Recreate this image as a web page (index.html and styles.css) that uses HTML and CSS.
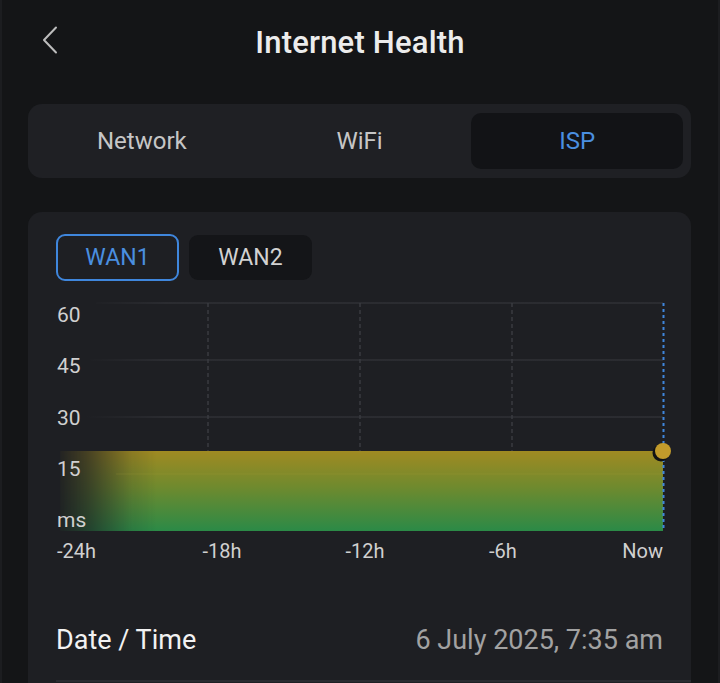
FILE: index.html
```html
<!DOCTYPE html>
<html lang="en">
<head>
  <meta charset="UTF-8" />
  <meta name="viewport" content="width=device-width, initial-scale=1.0"/>
  <title>Internet Health</title>
  <link rel="stylesheet" href="styles.css">
</head>
<body>
  <div class="page">
    <div class="header">
      <button class="back">
        <svg width="16" height="28" viewBox="0 0 16 28">
          <path d="M14 1.5 L2 14 L14 26.5" fill="none" stroke="#bdbdbd" stroke-width="2" stroke-linecap="round" stroke-linejoin="round"/>
        </svg>
      </button>
      <h1 class="title">Internet Health</h1>
      <span></span>
    </div>

    <div class="tabs">
      <div class="tab">Network</div>
      <div class="tab">WiFi</div>
      <div class="tab active">ISP</div>
    </div>

    <div class="card">
      <div class="wans">
        <button class="wan selected">WAN1</button>
        <button class="wan">WAN2</button>
      </div>

      <svg class="chart" width="635" height="280" viewBox="0 0 635 280">
        <defs>
          <linearGradient id="gridFade" gradientUnits="userSpaceOnUse" x1="30" x2="110" y1="0" y2="0">
            <stop offset="0" stop-color="#2f3035" stop-opacity="0"/>
            <stop offset="1" stop-color="#2f3035" stop-opacity="1"/>
          </linearGradient>
          <linearGradient id="fill" x1="0" x2="0" y1="0" y2="1">
            <stop offset="0" stop-color="#a08a22"/>
            <stop offset="0.45" stop-color="#6f8a2e"/>
            <stop offset="1" stop-color="#2b8a47"/>
          </linearGradient>
          <linearGradient id="fadeIn" gradientUnits="userSpaceOnUse" x1="0" x2="100" y1="0" y2="0">
            <stop offset="0" stop-color="#fff" stop-opacity="0"/>
            <stop offset="0.3" stop-color="#fff" stop-opacity="0.3"/>
            <stop offset="0.75" stop-color="#fff" stop-opacity="0.85"/>
            <stop offset="1" stop-color="#fff" stop-opacity="1"/>
          </linearGradient>
          <mask id="fillMask">
            <rect x="0" y="150" width="610" height="90" fill="url(#fadeIn)"/>
          </mask>
        </defs>

        <line x1="40" y1="8" x2="607" y2="8" stroke="url(#gridFade)" stroke-width="1.5"/>
        <line x1="34" y1="65" x2="607" y2="65" stroke="url(#gridFade)" stroke-width="1.5"/>
        <line x1="30" y1="122" x2="607" y2="122" stroke="url(#gridFade)" stroke-width="1.5"/>

        <line x1="152" y1="8" x2="152" y2="156" stroke="#3a3b40" stroke-width="1.5" stroke-dasharray="4 3"/>
        <line x1="304" y1="8" x2="304" y2="156" stroke="#3a3b40" stroke-width="1.5" stroke-dasharray="4 3"/>
        <line x1="456" y1="8" x2="456" y2="156" stroke="#3a3b40" stroke-width="1.5" stroke-dasharray="4 3"/>

        <rect x="4" y="156" width="603" height="80" fill="url(#fill)" mask="url(#fillMask)"/>
        <line x1="60" y1="179" x2="607" y2="179" stroke="#b0a040" stroke-opacity="0.2" stroke-width="1"/>

        <line x1="607.5" y1="8" x2="607.5" y2="236" stroke="#3f86dc" stroke-width="2" stroke-dasharray="3 3"/>
        <circle cx="605" cy="158" r="8.5" fill="#111214"/>
        <circle cx="607" cy="156" r="8" fill="#c29b2b"/>

        <g class="ylabels">
          <text x="1" y="27">60</text>
          <text x="1" y="78">45</text>
          <text x="1" y="130">30</text>
          <text x="1" y="181">15</text>
          <text x="1" y="232">ms</text>
        </g>
        <g class="xlabels">
          <text x="1" y="263">-24h</text>
          <text x="166" y="263" text-anchor="middle">-18h</text>
          <text x="309" y="263" text-anchor="middle">-12h</text>
          <text x="447" y="263" text-anchor="middle">-6h</text>
          <text x="607" y="263" text-anchor="end">Now</text>
        </g>
      </svg>

      <div class="row">
        <span class="label">Date / Time</span>
        <span class="value">6 July 2025, 7:35 am</span>
      </div>
      <div class="divider"></div>
    </div>
  </div>
</body>
</html>
```

FILE: styles.css
```css
* {
  margin: 0;
  padding: 0;
  box-sizing: border-box;
  font-family: Roboto, 'Liberation Sans', sans-serif;
}

body {
  background: #141517;
  color: #fff;
  width: 720px;
  height: 683px;
  overflow: hidden;
}

.page {
  height: 683px;
  overflow: hidden;
  border-left: 2px solid #1c1d20;
  border-right: 2px solid #1c1d20;
}

.header {
  height: 84px;
  display: grid;
  grid-template-columns: 1fr auto 1fr;
  align-items: center;
}

.back {
  width: 40px;
  height: 40px;
  margin-left: 40px;
  margin-top: -4px;
  background: transparent;
  border: none;
  display: flex;
  align-items: center;
}

.title {
  font-size: 31px;
  font-weight: 500;
  color: #ececec;
  letter-spacing: 0.2px;
}

.tabs {
  margin: 20px 27px 0 26px;
  height: 74px;
  padding: 9px 8px;
  background: #1f2024;
  border-radius: 14px;
  display: grid;
  grid-template-columns: 1fr 1fr 1fr;
  gap: 6px;
}

.tab {
  display: flex;
  align-items: center;
  justify-content: center;
  font-size: 24px;
  color: #c6c6c6;
  border-radius: 10px;
}

.tab.active {
  background: #121316;
  color: #4a8fe0;
}

.card {
  margin: 34px 27px 0 26px;
  height: 471px;
  padding: 22px 0 0 28px;
  background: #1e1f23;
  border-radius: 14px 14px 0 0;
}

.wans {
  display: flex;
  gap: 10px;
  align-items: center;
}

.wan {
  width: 123px;
  height: 45px;
  font-size: 23px;
  border-radius: 9px;
  border: none;
  background: #141518;
  color: #d2d2d2;
}

.wan.selected {
  height: 47px;
  border: 2px solid #3f86dc;
  background: transparent;
  color: #4a8fe0;
}

.chart {
  display: block;
  margin-top: 14px;
}

.chart text {
  font-family: Roboto, 'Liberation Sans', sans-serif;
  fill: #d0d0d0;
}

.ylabels text {
  font-size: 21px;
}

.xlabels text {
  font-size: 20px;
}

.row {
  display: flex;
  justify-content: space-between;
  align-items: center;
  height: 72px;
  margin-top: 29px;
  padding-right: 28px;
  font-size: 27px;
}

.label {
  color: #f2f2f2;
}

.value {
  color: #a2a2a2;
}

.divider {
  margin-top: 4px;
  border-top: 2px solid #2a2b30;
}
```
